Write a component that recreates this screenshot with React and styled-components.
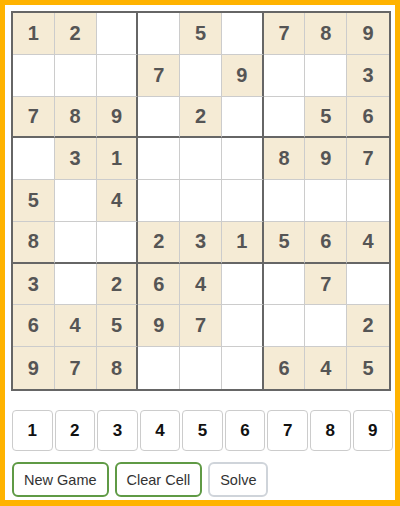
import React, { useState } from "react";
import styled, { createGlobalStyle } from "styled-components";

const GlobalStyle = createGlobalStyle`
  html, body {
    margin: 0;
    padding: 0;
    background: #ffffff;
  }
  * {
    box-sizing: border-box;
  }
`;

const puzzle = [
  "12..5.789",
  "...7.9..3",
  "789.2..56",
  ".31...897",
  "5.4......",
  "8..231564",
  "3.264..7.",
  "64597...2",
  "978...645",
];

const Frame = styled.div`
  width: 400px;
  height: 506px;
  border: 5px solid #ffb300;
  border-bottom-width: 6px;
  padding: 6px 0 0 6px;
  display: flex;
  flex-direction: column;
  font-family: "Liberation Sans", Arial, sans-serif;
`;

const Board = styled.div`
  width: 380px;
  height: 380px;
  border: 2px solid #666666;
  display: grid;
  grid-template-columns: repeat(9, 1fr);
  grid-template-rows: repeat(9, 1fr);
`;

const Cell = styled.div`
  display: flex;
  align-items: center;
  justify-content: center;
  background: ${(p) => (p.$given ? "#f5ebd5" : "#ffffff")};
  color: #555555;
  font-size: 20px;
  font-weight: bold;
  border-right: ${(p) =>
    p.$col === 8 ? "none" : p.$col % 3 === 2 ? "2px solid #666666" : "1px solid #cccccc"};
  border-bottom: ${(p) =>
    p.$row === 8 ? "none" : p.$row % 3 === 2 ? "2px solid #666666" : "1px solid #cccccc"};
  outline: ${(p) => (p.$selected ? "2px solid #5b9a3c" : "none")};
  outline-offset: -2px;
  cursor: pointer;
`;

const NumPad = styled.div`
  margin-top: 19px;
  width: 381px;
  display: flex;
  gap: 2px;
  margin-left: 1px;
`;

const NumKey = styled.button`
  flex: 1;
  height: 41px;
  padding: 0;
  background: #ffffff;
  border: 1px solid #cccccc;
  border-radius: 4px;
  font-family: "Liberation Sans", Arial, sans-serif;
  font-size: 17px;
  font-weight: bold;
  color: #111111;
  cursor: pointer;
`;

const Actions = styled.div`
  margin-top: 11px;
  margin-left: 1px;
  display: flex;
  gap: 6px;
`;

const ActionButton = styled.button`
  height: 35px;
  padding: 0 10px;
  background: #ffffff;
  border: 2px solid ${(p) => (p.$primary ? "#5f9a45" : "#cfd4da")};
  border-radius: 6px;
  font-family: "Liberation Sans", Arial, sans-serif;
  font-size: 14.5px;
  color: #333333;
  cursor: pointer;
`;

export default function App() {
  const [selected, setSelected] = useState(null);
  return (
    <>
      <GlobalStyle />
      <Frame>
        <Board>
          {puzzle.map((line, r) =>
            line.split("").map((ch, c) => (
              <Cell
                key={`${r}-${c}`}
                $row={r}
                $col={c}
                $given={ch !== "."}
                $selected={selected === r * 9 + c}
                onClick={() => setSelected(r * 9 + c)}
              >
                {ch !== "." ? ch : ""}
              </Cell>
            ))
          )}
        </Board>
        <NumPad>
          {[1, 2, 3, 4, 5, 6, 7, 8, 9].map((n) => (
            <NumKey key={n}>{n}</NumKey>
          ))}
        </NumPad>
        <Actions>
          <ActionButton $primary>New Game</ActionButton>
          <ActionButton $primary>Clear Cell</ActionButton>
          <ActionButton>Solve</ActionButton>
        </Actions>
      </Frame>
    </>
  );
}
